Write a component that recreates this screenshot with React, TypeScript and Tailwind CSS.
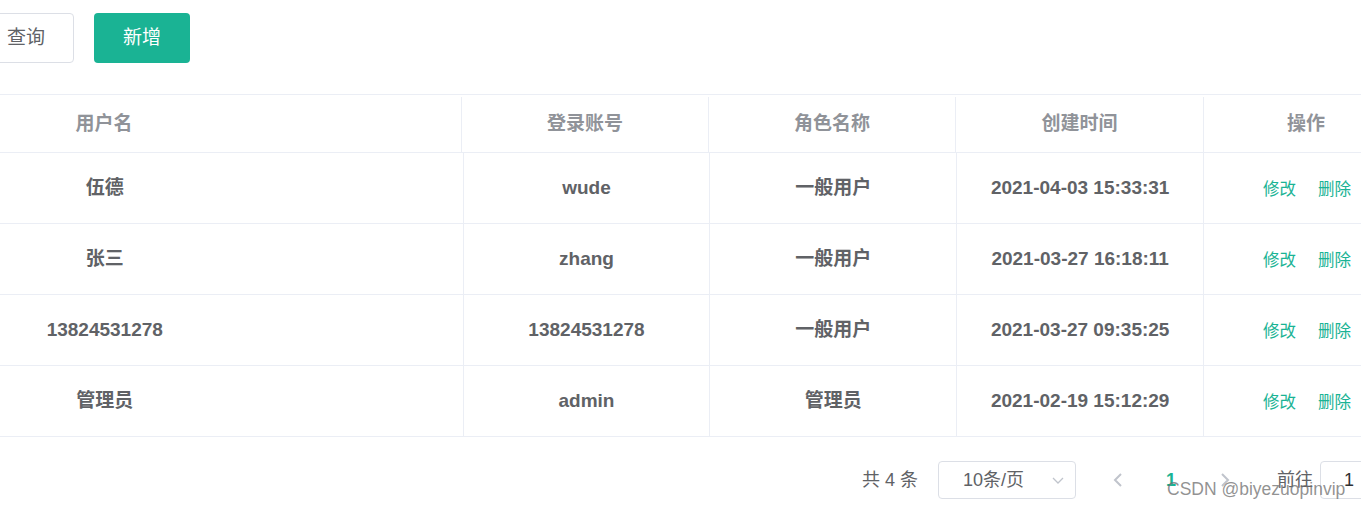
import React from "react";

const rows = [
  { name: "伍德", account: "wude", role: "一般用户", time: "2021-04-03 15:33:31" },
  { name: "张三", account: "zhang", role: "一般用户", time: "2021-03-27 16:18:11" },
  { name: "13824531278", account: "13824531278", role: "一般用户", time: "2021-03-27 09:35:25" },
  { name: "管理员", account: "admin", role: "管理员", time: "2021-02-19 15:12:29" },
];

export default function App() {
  return (
    <div
      className="relative w-[1361px] h-[507px] overflow-hidden bg-white"
      style={{ fontFamily: '"Liberation Sans", Arial, "Noto Sans CJK SC", sans-serif' }}
    >
      {/* toolbar */}
      <div className="flex items-center gap-[20px] pt-[13px]">
        <button className="ml-[-22px] h-[50px] w-[96px] rounded-[4px] border border-[#dcdfe6] bg-white text-[19px] text-[#606266]">
          查询
        </button>
        <button className="h-[50px] w-[96px] rounded-[4px] bg-[#1ab394] text-[19px] text-white">
          新增
        </button>
      </div>

      {/* table */}
      <div className="mt-[31px] ml-[-253px] w-[1661px]">
        <div className="flex h-[59px] border-y border-[#ebeef5] pt-[2px] text-[19px] font-bold text-[#909399]">
          <div className="flex w-[715px] items-center justify-center border-r border-[#ebeef5]">用户名</div>
          <div className="flex w-[247px] items-center justify-center border-r border-[#ebeef5]">登录账号</div>
          <div className="flex w-[247px] items-center justify-center border-r border-[#ebeef5]">角色名称</div>
          <div className="flex w-[248px] items-center justify-center border-r border-[#ebeef5]">创建时间</div>
          <div className="flex w-[204px] items-center justify-center">操作</div>
        </div>
        {rows.map((r) => (
          <div
            key={r.time}
            className="flex h-[71px] border-b border-[#ebeef5] text-[19px] font-bold text-[#606266]"
          >
            <div className="flex w-[717px] items-center justify-center border-r border-[#ebeef5]">{r.name}</div>
            <div className="flex w-[247px] items-center justify-center border-r border-[#ebeef5]">{r.account}</div>
            <div className="flex w-[247px] items-center justify-center border-r border-[#ebeef5]">{r.role}</div>
            <div className="flex w-[247px] items-center justify-center border-r border-[#ebeef5]">{r.time}</div>
            <div className="flex w-[204px] items-center justify-center gap-[22px] pl-[2px] pt-[2px] text-[16.5px] font-normal text-[#1ab394]">
              <span>修改</span>
              <span>删除</span>
            </div>
          </div>
        ))}
      </div>

      {/* pagination */}
      <div className="mt-[24px] flex h-[38px] items-center pl-[862px] text-[18px] text-[#606266]">
        <span className="whitespace-nowrap">共 4 条</span>
        <div className="ml-[20px] flex h-[38px] w-[138px] shrink-0 items-center justify-between rounded-[4px] border border-[#dcdfe6] pl-[24px] pr-[10px]">
          <span>10条/页</span>
          <svg width="14" height="14" viewBox="0 0 14 14" fill="none">
            <path d="M2 5l5 5 5-5" stroke="#c0c4cc" strokeWidth="1.3" />
          </svg>
        </div>
        <div className="ml-[22px] flex h-[38px] w-[40px] shrink-0 items-center justify-center">
          <svg width="12" height="16" viewBox="0 0 12 16" fill="none">
            <path d="M9 2L3 8l6 6" stroke="#c0c4cc" strokeWidth="2" />
          </svg>
        </div>
        <div className="ml-[13px] flex h-[38px] w-[40px] shrink-0 items-center justify-center font-bold text-[#1ab394]">
          1
        </div>
        <div className="ml-[14px] flex h-[38px] w-[40px] shrink-0 items-center justify-center">
          <svg width="12" height="16" viewBox="0 0 12 16" fill="none">
            <path d="M3 2l6 6-6 6" stroke="#c0c4cc" strokeWidth="2" />
          </svg>
        </div>
        <span className="ml-[32px] whitespace-nowrap">前往</span>
        <div className="ml-[7px] flex h-[38px] w-[58px] shrink-0 items-center justify-center rounded-[4px] border border-[#dcdfe6] text-[#303133]">
          1
        </div>
      </div>

      {/* watermark */}
      <div className="pointer-events-none absolute left-[1167px] top-[479px] whitespace-nowrap text-[17.5px] leading-[20px] text-[rgba(110,110,110,0.75)]">
        CSDN @biyezuopinvip
      </div>
    </div>
  );
}
